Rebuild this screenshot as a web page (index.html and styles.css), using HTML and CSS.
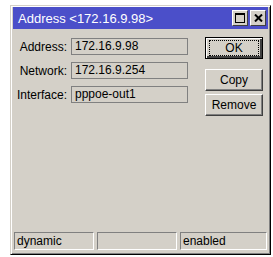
FILE: index.html
```html
<!DOCTYPE html>
<html lang="en">
<head>
  <meta charset="UTF-8">
  <title>Address &lt;172.16.9.98&gt;</title>
  <link rel="stylesheet" href="styles.css">
</head>
<body>
  <div class="window">
    <div class="titlebar">
      <span class="title">Address &lt;172.16.9.98&gt;</span>
      <span class="tb-btn">
        <svg width="10" height="10" viewBox="0 0 10 10"><rect x="0.5" y="0.5" width="9" height="9" fill="none" stroke="#000"/><rect x="0" y="0" width="10" height="2" fill="#000"/></svg>
      </span>
      <span class="tb-btn">
        <svg width="9" height="8" viewBox="0 0 9 8"><path d="M1 0.5 L8 7.5 M8 0.5 L1 7.5" stroke="#000" stroke-width="2"/></svg>
      </span>
    </div>

    <div class="content">
      <div class="form">
        <div class="row">
          <label>Address:</label>
          <div class="field">172.16.9.98</div>
        </div>
        <div class="row">
          <label>Network:</label>
          <div class="field">172.16.9.254</div>
        </div>
        <div class="row">
          <label>Interface:</label>
          <div class="field">pppoe-out1</div>
        </div>
      </div>

      <div class="buttons">
        <button class="button default"><span>OK</span></button>
        <button class="button copy"><span>Copy</span></button>
        <button class="button"><span>Remove</span></button>
      </div>
    </div>

    <div class="statusbar">
      <div class="panel p1">dynamic</div>
      <div class="panel p2"></div>
      <div class="panel p3">enabled</div>
    </div>
  </div>
</body>
</html>
```

FILE: styles.css
```css
body {
  margin: 0;
  background: #fff;
  font-family: "DejaVu Sans", "Liberation Sans", sans-serif;
  font-size: 11px;
  color: #000;
}
.window {
  margin: 5px 0 0 10px;
  width: 261px;
  height: 250px;
  box-sizing: border-box;
  border: 1px solid #000;
  border-top-color: #d4d0c8;
  border-left-color: #d4d0c8;
  box-shadow: inset 1px 1px 0 #fff, inset -1px -1px 0 #808080;
  background: #d4d0c8;
  display: flex;
  flex-direction: column;
  padding: 1px 2px 4px 2px;
}
.titlebar {
  height: 22px;
  background: #4b4fc9;
  display: flex;
  align-items: center;
  padding: 0 2px 0 5px;
  gap: 2px;
}
.title {
  flex: 1;
  color: #fff;
  font-family: "Liberation Sans", sans-serif;
  font-size: 13px;
}
.tb-btn {
  width: 14px;
  height: 14px;
  background: #d4d0c8;
  border: 1px solid;
  border-color: #fff #404040 #404040 #fff;
  display: flex;
  align-items: center;
  justify-content: center;
}
.content {
  flex: 1;
  display: flex;
  padding: 8px 0 0 0;
}
.form {
  display: flex;
  flex-direction: column;
  gap: 7px;
  padding-top: 1px;
}
.row {
  display: flex;
  align-items: center;
  gap: 4px;
}
.row label {
  width: 54px;
  text-align: right;
  font-family: "Liberation Sans", sans-serif;
  font-size: 12px;
}
.field {
  width: 112px;
  height: 15px;
  border: 1px solid #808080;
  padding: 0 0 0 3px;
  line-height: 15px;
  font-family: "Liberation Sans", sans-serif;
  font-size: 12px;
}
.buttons {
  margin-left: 17px;
  display: flex;
  flex-direction: column;
  gap: 3px;
}
.button {
  width: 58px;
  height: 22px;
  padding: 0;
  background: #d4d0c8;
  border: 1px solid;
  border-color: #fff #404040 #404040 #fff;
  box-shadow: inset -1px -1px 0 #808080;
  font-family: "Liberation Sans", sans-serif;
  font-size: 12px;
  color: #000;
}
.button.default {
  border: 1px solid #000;
  box-shadow: inset 1px 1px 0 #fff, inset -2px -2px 0 #404040;
  display: flex;
  align-items: center;
  justify-content: center;
}
.button.default span {
  width: 48px;
  height: 14px;
  line-height: 14px;
  outline: 1px dotted #000;
}
.button.copy {
  margin-top: 7px;
}
.statusbar {
  display: flex;
  gap: 3px;
  padding-left: 1px;
}
.panel {
  height: 18px;
  box-sizing: border-box;
  border: 1px solid;
  border-color: #808080 #fff #fff #808080;
  padding-left: 2px;
  line-height: 16px;
  font-family: "Liberation Sans", sans-serif;
  font-size: 12px;
}
.p1, .p2 { width: 80px; }
.p3 { width: 87px; }
```
